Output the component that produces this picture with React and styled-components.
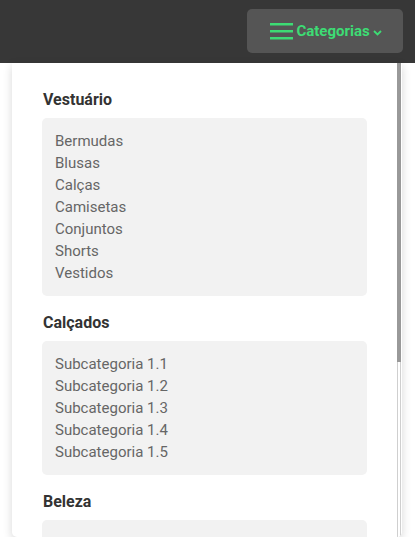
import React from "react";
import styled, { createGlobalStyle } from "styled-components";

const Global = createGlobalStyle`
  html, body { margin: 0; padding: 0; background: #fff; }
  body { font-family: Roboto, "Liberation Sans", sans-serif; }
  * { box-sizing: border-box; }
`;

const Header = styled.header`
  height: 63px;
  background: #373737;
  display: flex;
  justify-content: flex-end;
  align-items: flex-start;
  padding: 9px 12px 0 0;
`;

const MenuButton = styled.button`
  height: 44px;
  width: 156px;
  border: none;
  border-radius: 5px;
  background: #555555;
  color: #3ddc74;
  display: flex;
  align-items: center;
  justify-content: center;
  gap: 3px;
  font-family: Roboto, "Liberation Sans", sans-serif;
  font-weight: 700;
  font-size: 15px;
  padding: 0 0 0 2px;
  cursor: pointer;
`;

const Panel = styled.nav`
  position: relative;
  margin-left: 12px;
  width: 390px;
  height: 474px;
  background: #fff;
  border-radius: 0 0 5px 5px;
  box-shadow: 0 3px 10px rgba(0, 0, 0, 0.16);
  overflow: hidden;
`;

const Scroller = styled.div`
  height: 100%;
  overflow-y: auto;
  padding: 27px 35px 27px 30px;
  scrollbar-width: none;
  &::-webkit-scrollbar { display: none; }
`;

const ScrollTrack = styled.div`
  position: absolute;
  top: 0;
  bottom: 0;
  right: 1px;
  width: 4px;
  border-left: 1px solid #cfcfcf;
  border-right: 1px solid #cfcfcf;
  background: #fff;
`;

const ScrollThumb = styled.div`
  position: absolute;
  top: 0;
  left: -1px;
  right: -1px;
  height: 299px;
  background: #999;
`;

const Section = styled.section`
  & + & { margin-top: 17px; }
`;

const Title = styled.h3`
  margin: 0 0 8px 1px;
  font-size: 16px;
  line-height: 20px;
  font-weight: 700;
  color: #333;
`;

const List = styled.ul`
  list-style: none;
  margin: 0;
  padding: 12px 13px;
  background: #f2f2f2;
  border-radius: 5px;
`;

const Item = styled.li`
  font-size: 15px;
  line-height: 22px;
  color: #666;
`;

const sections = [
  { title: "Vestuário", items: ["Bermudas", "Blusas", "Calças", "Camisetas", "Conjuntos", "Shorts", "Vestidos"] },
  { title: "Calçados", items: ["Subcategoria 1.1", "Subcategoria 1.2", "Subcategoria 1.3", "Subcategoria 1.4", "Subcategoria 1.5"] },
  { title: "Beleza", items: ["Subcategoria 2.1", "Subcategoria 2.2", "Subcategoria 2.3", "Subcategoria 2.4", "Subcategoria 2.5"] },
];

export default function App() {
  return (
    <>
      <Global />
      <Header>
        <MenuButton>
          <svg width="23" height="17" viewBox="0 0 23 17">
            <rect x="0" y="0" width="23" height="2.5" fill="#3ddc74" />
            <rect x="0" y="7" width="23" height="2.5" fill="#3ddc74" />
            <rect x="0" y="14" width="23" height="2.5" fill="#3ddc74" />
          </svg>
          <span>Categorias</span>
          <svg width="9" height="6" viewBox="0 0 9 6" style={{ marginTop: 3 }}>
            <path d="M1 1 L4.5 4.5 L8 1" stroke="#3ddc74" strokeWidth="1.8" fill="none" />
          </svg>
        </MenuButton>
      </Header>
      <Panel>
        <Scroller>
          {sections.map((s) => (
            <Section key={s.title}>
              <Title>{s.title}</Title>
              <List>
                {s.items.map((i) => (
                  <Item key={i}>{i}</Item>
                ))}
              </List>
            </Section>
          ))}
        </Scroller>
        <ScrollTrack>
          <ScrollThumb />
        </ScrollTrack>
      </Panel>
    </>
  );
}
